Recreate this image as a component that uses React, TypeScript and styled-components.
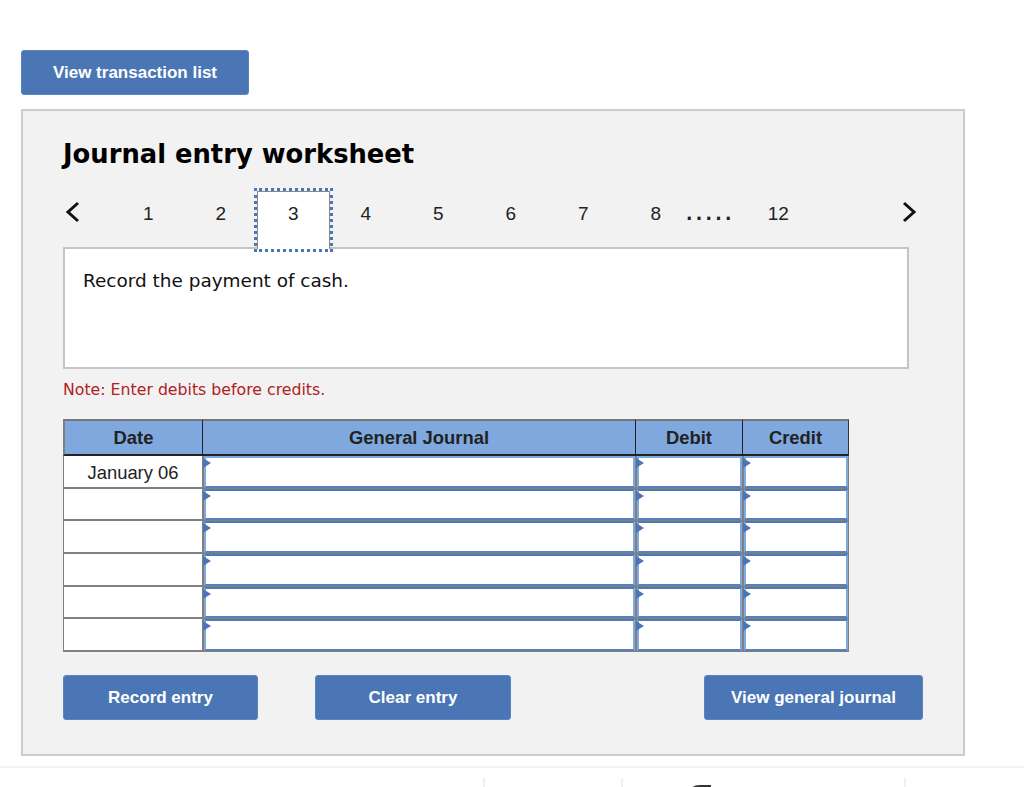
import { Fragment } from "react";
import styled, { createGlobalStyle } from "styled-components";

const GlobalStyle = createGlobalStyle`
  html, body {
    margin: 0;
    height: 787px;
    overflow: hidden;
    background: #fff;
    font-family: "Liberation Sans", Arial, sans-serif;
    color: #222;
  }
`;

const Page = styled.div`
  padding: 50px 0 0 21px;
`;

const ActionButton = styled.button<{ $width: number; $gap?: string }>`
  display: block;
  flex: none;
  width: ${({ $width }) => $width}px;
  height: 45px;
  margin-left: ${({ $gap }) => $gap ?? "0"};
  padding: 1px 0 0;
  border: 1px solid #5d85bd;
  border-radius: 3px;
  background: #4a76b5;
  color: #fff;
  font: bold 17px "Liberation Sans", Arial, sans-serif;
`;

const Panel = styled.section`
  box-sizing: border-box;
  width: 944px;
  height: 647px;
  margin-top: 14px;
  padding: 25px 40px 0;
  border: 2px solid #cccccc;
  background: #f2f2f2;
`;

const Title = styled.h1`
  margin: 0;
  height: 36px;
  color: #000;
  font: bold 25.8px/36px "DejaVu Sans", Verdana, sans-serif;
`;

const TabRow = styled.div`
  display: flex;
  align-items: flex-start;
  height: 56px;
  margin-top: 19px;
`;

const Chevron = styled.svg`
  flex: none;
  display: block;
  width: 18px;
  height: 24px;
  margin-top: 9px;
`;

const PrevSlot = styled.div`
  flex: none;
  width: 49px;
`;

const NextSlot = styled.div`
  margin-left: auto;
  margin-right: 4px;
`;

const Tab = styled.div<{ $active?: boolean }>`
  position: relative;
  flex: none;
  box-sizing: border-box;
  width: 72.5px;
  height: ${({ $active }) => ($active ? "58px" : "56px")};
  padding-top: ${({ $active }) => ($active ? "11px" : "12px")};
  text-align: center;
  font-size: 19px;
  line-height: 22px;
  color: #222;
  ${({ $active }) =>
    $active &&
    `
    z-index: 1;
    background: #fff;
    border: solid #8a8a8a;
    border-width: 1px 1px 0;
    outline: 3px dotted #4a76b5;
    outline-offset: 0;
  `}
`;

const Dots = styled.div`
  flex: none;
  width: 48px;
  margin: 0 8px 0 -6px;
  padding-top: 12px;
  color: #222;
  font: bold 17px/22px "DejaVu Sans", Verdana, sans-serif;
  letter-spacing: 3.3px;
  white-space: nowrap;
`;

const Prompt = styled.div`
  box-sizing: border-box;
  width: 846px;
  height: 122px;
  padding: 20px 18px;
  border: 2px solid #c4c4c4;
  background: #fff;
  color: #111;
  font: 18.45px/24px "DejaVu Sans", Verdana, sans-serif;
`;

const Note = styled.p`
  margin: 11px 0 0;
  height: 20px;
  color: #b0211c;
  font: 15.75px/20px "DejaVu Sans", Verdana, sans-serif;
`;

const Journal = styled.div`
  display: grid;
  grid-template-columns: 139px 433px 107px 107px;
  grid-template-rows: 37px repeat(6, 32.67px);
  box-sizing: border-box;
  width: 786px;
  margin-top: 19px;
`;

const HeadCell = styled.div<{ $first?: boolean; $last?: boolean }>`
  display: flex;
  align-items: center;
  justify-content: center;
  box-sizing: border-box;
  border-top: 2px solid #777;
  border-bottom: 2px solid #222;
  border-left: ${({ $first }) => ($first ? "2px solid #808080" : "1px solid #222")};
  border-right: ${({ $last }) => ($last ? "1px solid #333" : "0")};
  background: #7fa9de;
  color: #222;
  font-size: 18.4px;
  font-weight: bold;
`;

const DateCell = styled.div`
  display: flex;
  align-items: center;
  justify-content: center;
  box-sizing: border-box;
  padding-top: 4px;
  border-left: 1px solid #808080;
  border-bottom: 2px solid #808080;
  background: #fff;
  color: #222;
  font-size: 18.4px;
`;

const EntryCell = styled.div<{ $last?: boolean }>`
  position: relative;
  box-sizing: border-box;
  border: solid #808080;
  border-width: 0 ${({ $last }) => ($last ? "1px" : "0")} 0 2px;
  background: #808080;

  &::before {
    content: "";
    position: absolute;
    top: 2px;
    left: -1px;
    border-style: solid;
    border-width: 5px 0 5px 8px;
    border-color: transparent transparent transparent #4a76b5;
  }
`;

const EntryField = styled.div<{ $first?: boolean }>`
  box-sizing: border-box;
  height: calc(100% - 1px);
  border: 2px solid #7fa9de;
  border-top: 2px solid ${({ $first }) => ($first ? "#7fa9de" : "#4f79b3")};
  border-bottom: 2px solid #5a80b8;
  background: #fff;
`;

const ButtonRow = styled.div`
  display: flex;
  margin-top: 23px;
`;

const Footer = styled.footer`
  display: flex;
  height: 30px;
  margin: 10px 0 0 -21px;
  padding: 10px 0 0 483px;
  border-top: 2px solid #f3f3f3;
`;

const FooterCell = styled.div<{ $width: number }>`
  flex: none;
  width: ${({ $width }) => $width}px;
  height: 20px;
  border-left: 2px solid #f0f0f0;
  box-sizing: border-box;
  overflow: hidden;
`;

const FooterMark = styled.svg`
  display: block;
  width: 22px;
  height: 4px;
  margin: 7px 0 0 68px;
`;

const steps = ["1", "2", "3", "4", "5", "6", "7", "8"];
const rows = [0, 1, 2, 3, 4, 5];

const App = () => {
  return (
    <>
      <GlobalStyle />
      <Page>
        <ActionButton $width={228}>View transaction list</ActionButton>
        <Panel>
          <Title>Journal entry worksheet</Title>
          <TabRow>
            <PrevSlot>
              <Chevron viewBox="0 0 18 24">
                <path d="M15 3 L5 12 L15 21" fill="none" stroke="#111" strokeWidth="3" />
              </Chevron>
            </PrevSlot>
            {steps.map((step) => (
              <Tab key={step} $active={step === "3"}>
                {step}
              </Tab>
            ))}
            <Dots>.....</Dots>
            <Tab>12</Tab>
            <NextSlot>
              <Chevron viewBox="0 0 18 24">
                <path d="M3 3 L13 12 L3 21" fill="none" stroke="#111" strokeWidth="3" />
              </Chevron>
            </NextSlot>
          </TabRow>
          <Prompt>Record the payment of cash.</Prompt>
          <Note>Note: Enter debits before credits.</Note>
          <Journal>
            <HeadCell $first>Date</HeadCell>
            <HeadCell>General Journal</HeadCell>
            <HeadCell>Debit</HeadCell>
            <HeadCell $last>Credit</HeadCell>
            {rows.map((row) => (
              <Fragment key={row}>
                <DateCell>{row === 0 ? "January 06" : ""}</DateCell>
                <EntryCell>
                  <EntryField $first={row === 0} />
                </EntryCell>
                <EntryCell>
                  <EntryField $first={row === 0} />
                </EntryCell>
                <EntryCell $last>
                  <EntryField $first={row === 0} />
                </EntryCell>
              </Fragment>
            ))}
          </Journal>
          <ButtonRow>
            <ActionButton $width={195}>Record entry</ActionButton>
            <ActionButton $width={196} $gap="57px">
              Clear entry
            </ActionButton>
            <ActionButton $width={219} $gap="auto">
              View general journal
            </ActionButton>
          </ButtonRow>
        </Panel>
        <Footer>
          <FooterCell $width={138} />
          <FooterCell $width={283}>
            <FooterMark viewBox="0 0 22 4">
              <path d="M1 4 Q3 1 9 1 L20 1" fill="none" stroke="#333" strokeWidth="2" />
            </FooterMark>
          </FooterCell>
          <FooterCell $width={2} />
        </Footer>
      </Page>
    </>
  );
};

export default App;
